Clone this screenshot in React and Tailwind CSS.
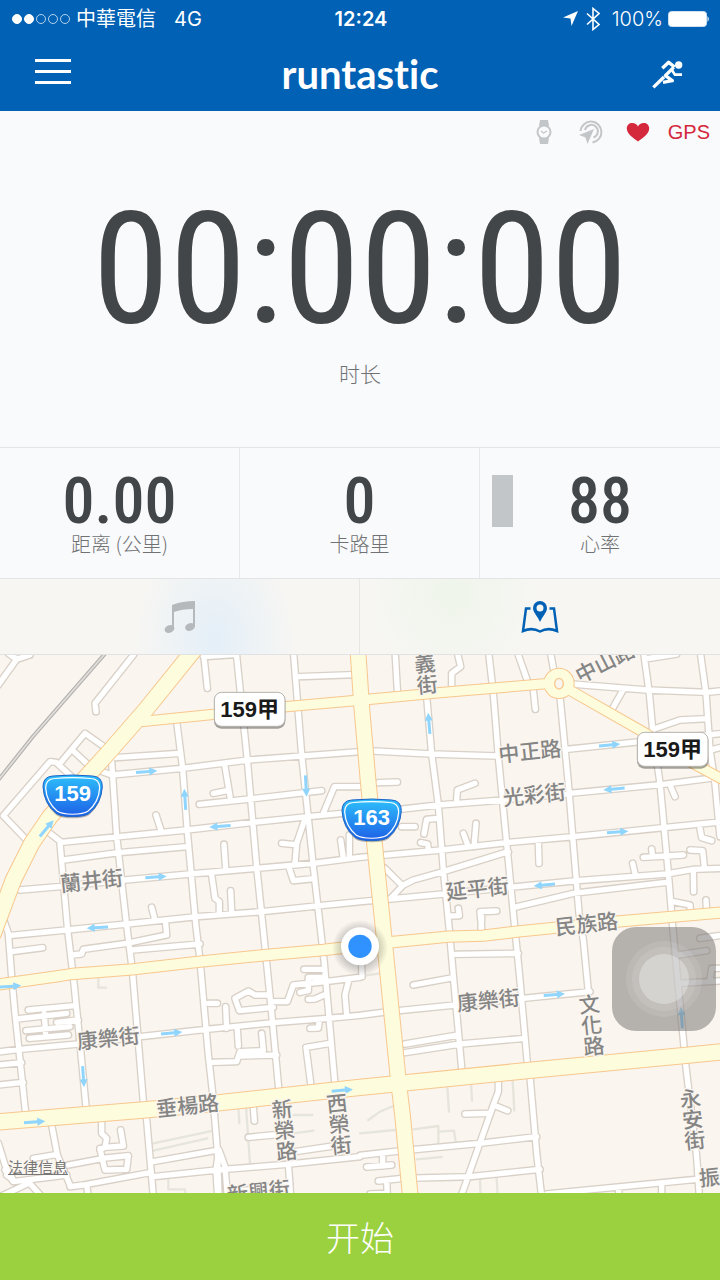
import { useState } from 'react'

const stats = [
    { label: '距离 (公里)', value: '0.00' },
    { label: '卡路里', value: '0' },
    { label: '心率', value: '88', bar: true },
]

// Streets, all in the map's own units
const streets = [
    // north - south
    'M335 335L350 560L378 810L397 960L430 1355L440 1410L460 1640',
    'M180 580L203 840L222 1000L240 1180L258 1370',
    'M8 800L25 850L35 980L45 1090L77 1390',
    'M155 1425L172 1515L212 1610',
    'M530 215L548 355L562 545L588 830L600 930L625 1215L638 1330L652 1500L657 1640',
    'M708 0L742 330L770 650L797 910L817 1110L836 1315',
    'M880 0L905 315L940 650L972 930L1005 1305',
    'M1280 140L1295 312L1315 465L1330 660L1347 830L1362 1000L1385 1255',
    'M1465 0L1480 130L1495 320L1520 580L1543 820L1558 970L1582 1240',
    'M1590 1280L1610 1510L1625 1640',
    'M1650 0L1662 65', 'M1680 140L1705 400L1737 790L1750 870L1765 1025',
    'M1930 0L1948 130L1960 260L1980 400L2005 670L2018 830L2053 1200',
    'M2056 1235L2090 1520L2098 1640',
    'M2100 0L2118 130L2130 300L2145 400L2160 560',
    // east - west
    'M300 362L335 375L548 355L745 330L1080 305',
    'M345 323L540 310',
    'M598 463L750 447L965 422',
    'M150 550L185 577L560 540L760 517L925 500L1080 485',
    'M190 630L355 608L560 590',
    'M60 720L200 708L375 690L570 672L770 655L940 640L1080 622L1325 600L1520 578L1720 560L1990 533L2170 515',
    'M25 857L200 840L380 822L590 800L785 785L950 768L1080 755L1170 747L1330 732L1530 712L1730 692L2000 672L2080 658L2170 655',
    'M1155 655L1205 705', 'M1170 747L1210 705L1240 690L1330 665L1525 605',
    'M1540 773L1720 730L2000 697',
    'M1200 478L1315 465L1510 450L1710 430L1990 403L2130 385',
    'M1120 303L1295 312L1490 318', 'M1700 298L1920 275L2120 255L2170 250',
    'M2125 302L2170 290',
    'M1715 102L1940 120L2120 127L2170 122',
    'M1935 27L2030 12', 'M1868 122L1835 180', 'M1960 238L2040 210L2120 206',
    'M-5 1206L60 1198L235 1182L420 1160L620 1138L820 1118L985 1105L1080 1096L1165 1085L1365 1065L1570 1045L1770 1025',
    // side lanes, north west
    'M612 22L622 115', 'M610 20L700 14', 'M895 80L1060 74',
    'M400 15L285 160L288 185', 'M52 25L-5 105', 'M25 10L50 28L90 15',
    'M75 565L10 497L150 335L168 337L215 380', 'M180 340L255 250L312 290', 'M215 298L262 342',
    'M640 430L682 422', 'M675 350L690 440', 'M468 495L482 538', 'M672 583L677 655',
    'M635 675L645 745L658 755L658 790', 'M692 722L695 788', 'M455 772L465 810',
    'M912 515L890 580L885 640', 'M845 580L887 584', 'M868 655L880 692L940 686',
    'M1080 410L1003 410L970 490', 'M1022 570L1030 625', 'M1048 555L1048 620',
    // side lanes, north east
    'M1185 0L1192 120', 'M1370 0L1382 50L1355 70L1355 110', 'M1555 15L1582 92', 'M1600 120L1606 178',
    'M1135 398L1192 396', 'M1370 450L1372 420L1425 400', 'M1205 530L1245 530',
    'M1315 505L1280 508L1272 552', 'M1390 550L1405 590', 'M1428 520L1422 590',
    'M1262 578L1283 582L1285 600', 'M1615 575L1617 640', 'M2010 405L2025 440',
    'M2100 535L2105 563L2135 572', 'M1930 622L2050 615', 'M1955 597L1958 620',
    'M2070 600L2108 602L2113 650', 'M1898 640L1905 670', 'M2080 665L2081 725',
    'M2020 755L2070 765L2072 795', 'M2118 750L2120 790', 'M1375 775L1378 797L1350 798',
    'M1490 783L1440 785L1445 835',
    // side lanes, south west
    'M35 905L128 893', 'M215 915L245 912L250 898L380 880L500 855L497 820', 'M395 900L600 882',
    'M85 1080L225 1067', 'M50 1107L200 1090', 'M170 1117L235 1110', 'M78 1142L210 1130', 'M88 1165L205 1155', 'M133 1090L137 1155',
    'M-5 1245L65 1238', 'M-5 1305L70 1297', 'M625 1060L652 1060', 'M677 1070L680 1135',
    'M810 1035L765 1035L745 1023L705 1045L718 1082L820 1072', 'M820 1055L862 1055L880 1005L975 995L1080 982',
    'M912 958L970 958', 'M925 982L970 982', 'M900 1027L925 1022L925 985', 'M925 1048L945 1047L972 1035',
    'M1045 995L1035 1035L1040 1095', 'M712 1140L715 1188', 'M785 1150L790 1202L720 1205L710 1235L640 1237',
    'M720 1218L830 1215', 'M930 1135L955 1134L958 1110', 'M990 1180L918 1192L932 1300',
    'M305 1415L305 1450L320 1465L315 1492L370 1488L362 1440', 'M300 1500L318 1490', 'M300 1495L306 1525L385 1517L380 1558L315 1560L306 1525',
    'M205 1545L300 1527', 'M460 1535L655 1500', 'M460 1580L650 1560L860 1543L1080 1520',
    'M210 1610L250 1605L450 1568', 'M657 1500L675 1550L682 1640', 'M655 1510L648 1560L653 1640',
    'M260 1605L265 1640', 'M865 1540L872 1640', 'M690 1628L870 1600', 'M760 1370L763 1413',
    'M745 1462L850 1452', 'M885 1505L1000 1488',
    'M-5 1480L15 1545L40 1590L20 1575M15 1560L40 1595L200 1575', 'M80 1590L130 1645', 'M0 1640L90 1598', 'M100 1525L172 1513',
    // side lanes, south east
    'M1365 913L1555 910', 'M1240 1005L1360 983', 'M1215 1182L1375 1155', 'M1215 1208L1380 1182L1575 1165',
    'M1495 1295L1495 1325L1480 1365L1390 1620L1380 1645', 'M1395 1392L1465 1390', 'M1480 1365L1523 1382',
    'M1080 1516L1198 1503L1440 1480L1610 1460', 'M1100 1551L1175 1545', 'M1148 1515L1148 1548',
    'M1135 1593L1210 1585L1410 1580L1620 1558', 'M1160 1590L1162 1640', 'M1110 1632L1160 1630',
    'M1640 1632L2090 1588', 'M1855 1615L1858 1640', 'M1985 1605L1985 1640',
    'M2035 915L2120 902', 'M2100 865L2170 855', 'M2040 1000L2170 992', 'M2130 990L2135 955L2170 955',
    'M1445 800L1443 840', 'M1085 950L1086 980',
].join('')

const paths = 'M295 985L295 1013L318 1013M460 1480L640 1442M460 1502L622 1465M715 1370L718 1420M738 1370L750 1540M880 1395L937 1395M880 1450L940 1442M505 1590L505 1618L555 1618L555 1630M1342 1310L1347 1385M1413 1300L1416 1352M1538 1290L1543 1382M1105 1410L1140 1385L1180 1368M1080 1450L1185 1440M1240 1438L1315 1428L1315 1478M1315 1445L1362 1442L1367 1475M1250 1528L1325 1521M1440 1590L1442 1640M1490 1585L1493 1640M1085 978L1140 970'

const avenues = [
    { w: 46, d: 'M590 -10L435 182L325 308L150 500L95 580L40 690L-20 850' },
    { w: 28, d: 'M430 214L640 193L860 170L1085 150L1320 128L1640 101' },
    { w: 28, d: 'M1700 115L1940 252L2070 335L2180 395' },
    { w: 44, d: 'M1073 -10L1085 170L1105 400L1150 840L1195 1290L1208 1400L1232 1650' },
    { w: 31, d: 'M-10 1004L80 992L170 979L215 972L397 958L600 935L800 915L970 900L1180 876L1345 860L1450 857L1550 845L1850 815L2170 787' },
    { w: 46, d: 'M-10 1416L430 1380L640 1360L1080 1312L1580 1262L2050 1217L2170 1205' },
]

const arrows = [
    [440, 365, -5], [555, 448, -94], [918, 408, 87], [660, 529, 175], [468, 681, -4], [140, 535, -50], [292, 833, 177],
    [1287, 220, -95], [1829, 285, -5], [1842, 417, 175], [1853, 546, -4], [1633, 705, 175],
    [32, 1009, -4], [515, 1149, -6], [250, 1280, 86], [104, 1416, -4], [1027, 1321, -5],
    [1663, 1034, -5], [2045, 1103, -94],
]

const labels = [
    ['蘭井街', 277, 715, -6], ['中正路', 1592, 327, -6], ['光彩街', 1605, 457, -6], ['延平街', 1434, 739, -6],
    ['民族路', 1762, 845, -6], ['康樂街', 327, 1188, -6], ['康樂街', 1467, 1074, -6], ['垂楊路', 565, 1390, -6],
    ['新興街', 778, 1648, -6], ['中山路', 1825, 58, -27],
]

const columnLabels = [
    ['義街', 1278, 72], ['新榮路', 853, 1440], ['西榮街', 1017, 1422], ['文化路', 1775, 1125],
    ['永安街', 2078, 1408], ['振', 2128, 1582],
]

function Shield({ x, y, text }) {
    const d = 'M-60 -62Q0 -68 60 -62Q89 -60 89 -30Q86 20 50 50Q36 60 0 60Q-36 60 -50 50Q-86 20 -89 -30Q-89 -60 -60 -62Z'
    return (
        <g transform={`translate(${x} ${y})`}>
            <path d={d} transform="translate(0 5)" fill="#00000040" />
            <path d={d} fill="url(#shield)" stroke="#1c63c9" strokeWidth="3" />
            <path d={d} transform="scale(.91 .88)" fill="none" stroke="#fff" strokeWidth="4" />
            <text y="12" textAnchor="middle" fill="#fff" className="font-['Liberation_Sans'] text-[66px] font-bold">{text}</text>
        </g>
    )
}

function RoadSign({ x, y }) {
    return (
        <g transform={`translate(${x} ${y})`}>
            <rect x="-107" y="-46" width="214" height="104" rx="22" fill="#00000059" />
            <rect x="-106" y="-51" width="212" height="102" rx="22" fill="#fff" stroke="#b5b1ac" strokeWidth="3" />
            <text y="23" textAnchor="middle" fill="#1a1a1a" className="font-['Liberation_Sans','Noto_Sans_CJK_TC',sans-serif] text-[66px] font-bold">159甲</text>
        </g>
    )
}

function StreetMap() {
    return (
        <svg viewBox="0 15 2160 1614" className="block h-auto w-full" role="img" aria-label="地图">
            <defs>
                <linearGradient id="shield" x1="0" y1="0" x2="0" y2="1">
                    <stop offset="0" stopColor="#2dc0fb" />
                    <stop offset="1" stopColor="#1d5fe6" />
                </linearGradient>
                <radialGradient id="dotShadow">
                    <stop offset=".6" stopColor="#000" stopOpacity=".22" />
                    <stop offset="1" stopColor="#000" stopOpacity="0" />
                </radialGradient>
            </defs>
            <rect y="15" width="2160" height="1614" fill="#faf5ef" />
            <g fill="none" strokeLinejoin="round" strokeLinecap="round">
                <path d={paths} stroke="#e6e5dc" strokeWidth="7" />
                <path d="M316 10L100 258L-5 390" stroke="#b4b2b0" strokeWidth="12" />
                <path d="M316 10L100 258L-5 390" stroke="#e2dfdb" strokeWidth="5" />
                <path d={streets} stroke="#d9d1c7" strokeWidth="24" />
                <path d={streets} stroke="#fff" strokeWidth="16" />
                {avenues.map(({ d, w }) => <path key={d} d={d} stroke="#f8c78e" strokeWidth={w + 6} />)}
                <circle cx="1677" cy="100" r="44" fill="#f8c78e" stroke="#f8c78e" strokeWidth="6" />
                {avenues.map(({ d, w }) => <path key={d} d={d} stroke="#fdfcdc" strokeWidth={w} />)}
                <circle cx="1677" cy="100" r="44" fill="#fdfcdc" />
                <ellipse cx="1677" cy="101" rx="13" ry="16" fill="#faf5ef" stroke="#f8c78e" strokeWidth="4" />
            </g>
            {arrows.map(([x, y, a]) => (
                <path key={`${x}-${y}`} transform={`translate(${x} ${y}) rotate(${a})`} d="M-32 -4.500H8V-12L32 0L8 12V4.500H-32Z" fill="#8fd5fd" />
            ))}
            <g fill="#858585" stroke="#faf5ef" strokeWidth="8" strokeLinejoin="round" textAnchor="middle" className="font-['Noto_Sans_CJK_TC',sans-serif] text-[63px] font-medium [paint-order:stroke]">
                {labels.map(([name, x, y, a]) => (
                    <text key={`${name}-${x}`} transform={`translate(${x} ${y}) rotate(${a})`}>{name}</text>
                ))}
                {columnLabels.map(([name, x, y]) => (
                    <text key={name} transform={`translate(${x} ${y}) rotate(-6)`} className="[writing-mode:vertical-rl]">{name}</text>
                ))}
            </g>
            <RoadSign x={749} y={178} />
            <RoadSign x={2018} y={298} />
            <Shield x={218} y={440} text="159" />
            <Shield x={1115} y={512} text="163" />
            <circle cx="1080" cy="894" r="84" fill="url(#dotShadow)" />
            <circle cx="1080" cy="889" r="57" fill="#fff" />
            <circle cx="1080" cy="889" r="35" fill="#2f92ff" />
        </svg>
    )
}

function StatusBar() {
    return (
        <div className="grid h-[37px] grid-cols-3 items-center pr-2.5 pl-3 font-['Inter','Noto_Sans_CJK_TC',sans-serif] text-xl leading-6">
            <div className="flex items-center gap-1.5 whitespace-nowrap">
                <svg width="58" height="12" viewBox="0 0 58 12" fill="none" stroke="#fff">
                    <circle cx="5" cy="6" r="4.500" fill="#fff" />
                    <circle cx="17" cy="6" r="4.500" fill="#fff" />
                    <circle cx="29" cy="6" r="4.500" strokeWidth=".7" />
                    <circle cx="41" cy="6" r="4.500" strokeWidth=".7" />
                    <circle cx="53" cy="6" r="4.500" strokeWidth=".7" />
                </svg>
                <span>中華電信</span>
                <span className="pl-3">4G</span>
            </div>
            <div className="text-center font-semibold">12:24</div>
            <div className="flex items-center justify-end gap-2">
                <svg width="15" height="15" viewBox="0 0 15 15" fill="#fff"><path d="M15 0L8.500 15L7.500 7.500L0 6.500Z" /></svg>
                <svg width="14" height="24" viewBox="0 0 14 24" fill="none" stroke="#fff" strokeWidth="1.600"><path d="M1 6.500L13 17.500L7 22.500V1.500L13 6.500L1 17.500" /></svg>
                <span className="pl-1 font-light">100%</span>
                <svg width="43" height="18" viewBox="0 0 43 18" className="-ml-1" fill="#fff">
                    <rect x="1.500" y="1.500" width="38" height="15" rx="3" stroke="#cfe0f2" strokeWidth="1" />
                    <path d="M40.500 6Q43 9 40.500 12Z" />
                </svg>
            </div>
        </div>
    )
}

function Logo() {
    return (
        <div className="relative font-['Lato',sans-serif] text-[40px] leading-[48px] font-bold [font-variant-ligatures:none]">
            runtastic
        </div>
    )
}

function Header() {
    return (
        <header className="bg-[#0061b5] text-white">
            <StatusBar />
            <div className="flex h-[74px] items-center justify-between px-[35px]">
                <button aria-label="菜单" className="flex flex-col gap-2 pt-1 pb-2.5">
                    <span className="h-[3px] w-9 bg-white" />
                    <span className="h-[3px] w-9 bg-white" />
                    <span className="h-[3px] w-9 bg-white" />
                </button>
                <Logo />
                <button aria-label="运动类型" className="-mr-0.5">
                    <svg width="38" height="34" viewBox="868 172 114 102" fill="none" stroke="#fff" strokeWidth="10" strokeLinejoin="round">
                        <circle cx="957" cy="196" r="11" fill="#fff" stroke="none" />
                        <path d="M908 206L927 188L945 202" />
                        <path d="M936 210L946 225H967" strokeWidth="8" />
                        <path d="M942 203L917 228L938 243L910 248" strokeWidth="10" />
                        <path d="M913 232L881 263" />
                    </svg>
                </button>
            </div>
        </header>
    )
}

function SensorRow() {
    return (
        <div className="flex h-[42px] items-center justify-end gap-[22px] px-2.5">
            <svg width="24" height="24" viewBox="-4 0 24 24" fill="#c3c6c8">
                <path d="M4 0H12L13 6H3ZM3 18H13L12 24H4Z" />
                <circle cx="8" cy="12" r="6.500" fill="#f9fafc" stroke="#c3c6c8" strokeWidth="2" />
                <path d="M5 11L7.500 13L11 11" fill="none" stroke="#c3c6c8" strokeWidth="1.200" />
            </svg>
            <svg width="26" height="26" viewBox="0 0 26 26" fill="none" stroke="#c3c6c8" strokeWidth="2">
                <path d="M2.500 12A10.500 10.500 0 1 1 14.500 23.500" />
                <path d="M7 11A6.500 6.500 0 1 1 15.500 18.500" />
                <path d="M16 10L9.500 25L7.500 18.500L1 16Z" fill="#c3c6c8" stroke="none" />
            </svg>
            <svg width="24" height="20" viewBox="0 0 24 20" fill="#d4283c">
                <path d="M12 19.500C8 16.500 .8 12 .8 6.500C.8 3 3.300 1 6.200 1C9 1 11 2.500 12 4.500C13 2.500 15 1 17.800 1C20.700 1 23.200 3 23.200 6.500C23.200 12 16 16.500 12 19.500Z" />
            </svg>
            <span className="-ml-1 font-['Liberation_Sans',sans-serif] text-xl leading-6 text-[#d4283c]">GPS</span>
        </div>
    )
}

export default function App() {
    const [tab, setTab] = useState('map')

    return (
        <div className="flex min-h-screen flex-col bg-[#f9fafc] font-['Noto_Sans_CJK_SC',sans-serif] text-[#434648]">
            <Header />

            <main className="flex grow flex-col">
                <SensorRow />

                {/* Duration */}
                <section className="flex flex-col items-center pt-9 pb-[60px]">
                    <div className="font-['Roboto_Condensed','Liberation_Sans',sans-serif] text-[156px] leading-[160px]">00:00:00</div>
                    <div className="mt-2.5 text-[21px] leading-7 font-light text-[#6f7173]">时长</div>
                </section>

                {/* Stats */}
                <section className="grid grid-cols-3 divide-x divide-[#e6e8ea] border-y border-[#e2e4e6]">
                    {stats.map(({ label, value, bar }) => (
                        <div key={label} className="relative flex flex-col items-center pt-[22px] pb-6">
                            {bar && <span className="absolute top-[27px] left-3 h-[52px] w-[21px] bg-[#c3c6c9]" />}
                            <div className="font-['Roboto_Condensed','Liberation_Sans',sans-serif] text-[64px] leading-[64px] font-medium">{value}</div>
                            <div className="text-xl leading-5 font-light text-[#6f7173]">{label}</div>
                        </div>
                    ))}
                </section>

                {/* Tabs */}
                <div className="grid h-[76px] grid-cols-2 divide-x divide-[#e6e6e4] border-b border-[#e0e2e3] bg-[#f7f6f3]">
                    <button
                        aria-label="音乐"
                        onClick={() => setTab('music')}
                        className={`flex items-center justify-center bg-[radial-gradient(ellipse_80px_110px_at_60%_80%,#e4eff8_0%,#f7f6f300_100%)] ${tab === 'music' ? 'text-[#0061b5]' : 'text-[#b5b9bb]'}`}
                    >
                        <svg width="32" height="34" viewBox="0 0 32 34" fill="currentColor">
                            <path d="M8 5Q18 1 31 1V27H29V9Q18 9 10 12V29H8Z" />
                            <ellipse cx="5.500" cy="29" rx="5" ry="3.800" transform="rotate(-20 5.500 29)" />
                            <ellipse cx="26" cy="27" rx="5" ry="3.800" transform="rotate(-20 26 27)" />
                        </svg>
                    </button>
                    <button
                        aria-label="地图"
                        onClick={() => setTab('map')}
                        className={`flex items-center justify-center bg-[radial-gradient(ellipse_90px_90px_at_26%_20%,#eff5eb_0%,#f7f6f300_100%)] ${tab === 'map' ? 'text-[#0061b5]' : 'text-[#b5b9bb]'}`}
                    >
                        <svg width="38" height="34" viewBox="0 0 38 34" fill="none" stroke="currentColor" strokeWidth="2.500">
                            <path d="M9.500 8.500H5L2 31Q11 27 19 31.500Q27 27 36 31L33 8.500H28.500" />
                            <path fillRule="evenodd" d="M19 22C17 17 12 12.500 12 8A7 7 0 0 1 26 8C26 12.500 21 17 19 22ZM19 4.500A3.500 3.500 0 1 0 19 11.500A3.500 3.500 0 1 0 19 4.500Z" fill="currentColor" stroke="none" />
                        </svg>
                    </button>
                </div>

                {/* Map */}
                <section className="relative grow bg-[#faf5ef]">
                    <StreetMap />
                    <a href="#legal" className="absolute bottom-4 left-2 text-[15px] leading-5 text-[#777] underline">法律信息</a>
                    <button aria-label="辅助触控" className="absolute right-1 bottom-[162px] flex size-[104px] items-center justify-center rounded-3xl bg-[#7b7976]/55">
                        <span className="flex size-[76px] items-center justify-center rounded-full bg-white/10">
                            <span className="flex size-16 items-center justify-center rounded-full bg-white/10">
                                <span className="size-[50px] rounded-full bg-white/30" />
                            </span>
                        </span>
                    </button>
                </section>
            </main>

            <button className="h-[87px] w-full bg-[#9bd13f] text-[34px] leading-10 font-light text-white">开始</button>
        </div>
    )
}
